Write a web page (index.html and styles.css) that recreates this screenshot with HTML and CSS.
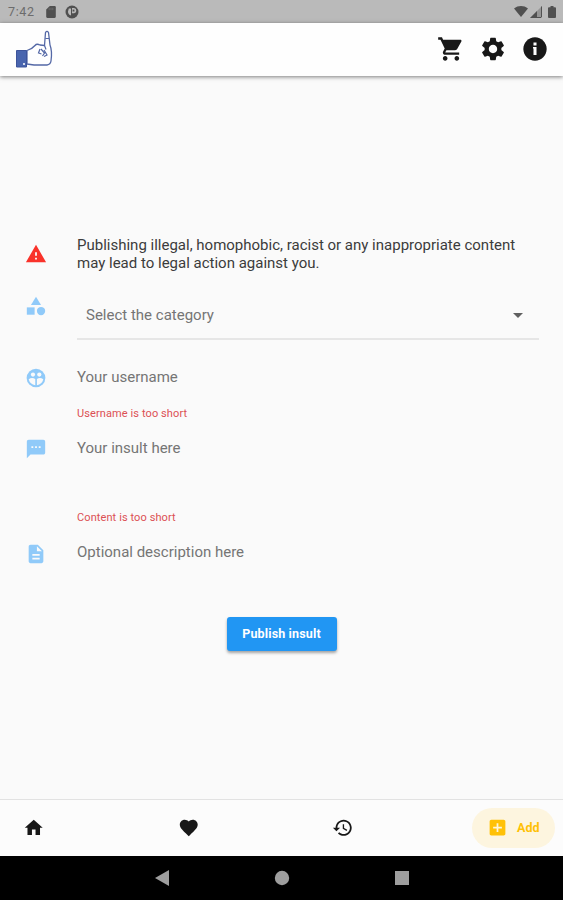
FILE: index.html
```html
<!DOCTYPE html>
<html lang="en">
<head>
<meta charset="utf-8">
<title>Publish insult</title>
<link rel="stylesheet" href="styles.css">
</head>
<body>
<div class="screen">
  <div class="status">
    <span class="clock">7:42</span>
    <svg class="sd" viewBox="4 2 16 20"><path d="M18 2h-8L4 8v12c0 1.100.9 2 2 2h12c1.100 0 2-.9 2-2V4c0-1.100-.9-2-2-2z"/><path d="M9 5v4M12 5v4M15 5v4" stroke="#777" stroke-width="1.200"/></svg>
    <svg class="pp" viewBox="0 0 14 14"><circle cx="7" cy="7" r="6.500"/><path d="M3.800 3.400H6v7.200Q3 9.500 3 6.500zM7 3h2q2.300.4 2.300 2.700T9 8.300H7z" fill="#bababa"/><path d="M7.600 4.600h1.800v1.900H7.600z"/></svg>
    <span class="spacer"></span>
    <svg class="wifi" viewBox="0 0 14 11"><path d="M0 2.500C4-.8 10-.8 14 2.500L7 11z"/></svg>
    <svg class="cell" viewBox="0 0 12 12"><path d="M12 0v12H0z" opacity=".35"/><path d="M7 5v7H0zM11 1v11h1V0zM7 11h5v1H7z"/></svg>
    <svg class="battery" viewBox="0 0 8 12"><path d="M2.500 0h3v1.200H7q1 0 1 1V11q0 1-1 1H1q-1 0-1-1V2.200q0-1 1-1h1.500z"/></svg>
  </div>
  <header class="appbar">
    <svg class="logo" viewBox="0 0 38 40">
      <path d="M11 20.500C14 19.500 17 18 19 15.500C20 14.200 22 14 24 15L28.500 15.500L29.500 2.500Q31 .2 32.500 2.500L34 15C36 20 36 24 35 31Q34.500 34.500 31 35L18 35L11 34z" fill="#fff" stroke="#5468a6" stroke-width="1.300" stroke-linejoin="round"/>
      <path d="M29.300 8.500h3.800M28.500 15.500l1.500 4M24 19l-1.500 4 3 1M25 19l3.500 4-2 3M28 20l3 5-3 1.500" fill="none" stroke="#5468a6" stroke-width="1.200"/>
      <path d="M.5 20.500h10V37H.5z" fill="#4965ae" stroke="#3d549b"/>
      <circle cx="8" cy="34" r="1" fill="#fff"/>
    </svg>
    <span class="spacer"></span>
    <svg class="action" viewBox="0 0 24 24"><path d="M7 18c-1.100 0-1.990.9-1.990 2S5.900 22 7 22s2-.9 2-2-.9-2-2-2zM1 2v2h2l3.600 7.590-1.350 2.450c-.16.280-.25.610-.25.960 0 1.100.9 2 2 2h12v-2H7.420c-.14 0-.25-.11-.25-.25l.03-.12.900-1.630h7.450c.75 0 1.410-.41 1.750-1.030l3.580-6.490c.08-.14.120-.31.120-.48 0-.55-.45-1-1-1H5.210l-.94-2H1zm16 16c-1.100 0-1.990.9-1.990 2s.89 2 1.990 2 2-.9 2-2-.9-2-2-2z"/></svg>
    <svg class="action" viewBox="0 0 24 24"><path d="M19.140 12.940c.04-.3.060-.61.060-.94 0-.32-.02-.64-.07-.94l2.030-1.580c.18-.14.230-.41.120-.61l-1.920-3.320c-.12-.22-.37-.29-.59-.22l-2.390.960c-.5-.38-1.030-.7-1.620-.94l-.36-2.540c-.04-.24-.24-.41-.48-.41h-3.840c-.24 0-.43.170-.47.410l-.36 2.540c-.59.240-1.130.570-1.620.940l-2.390-.96c-.22-.08-.47 0-.59.220L2.740 8.870c-.12.210-.08.470.120.610l2.030 1.580c-.05.300-.09.630-.09.940s.02.640.070.940l-2.030 1.580c-.18.140-.23.410-.12.610l1.920 3.320c.12.220.37.290.59.220l2.390-.96c.5.380 1.030.700 1.620.940l.36 2.540c.05.240.24.410.48.410h3.840c.24 0 .44-.17.470-.41l.36-2.540c.59-.24 1.130-.56 1.620-.94l2.390.960c.22.080.47 0 .59-.22l1.920-3.320c.12-.22.070-.47-.12-.61l-2.010-1.580zM12 15.600c-1.980 0-3.600-1.620-3.600-3.600s1.620-3.600 3.600-3.600 3.600 1.620 3.600 3.600-1.620 3.600-3.600 3.600z"/></svg>
    <svg class="action" viewBox="0 0 24 24"><path d="M12 2C6.480 2 2 6.480 2 12s4.480 10 10 10 10-4.480 10-10S17.520 2 12 2z"/><path class="info-mark" d="M10.700 6.500h2.600v2.500h-2.600zM10.300 10.300h3v6.900h-2.600v-5.600h-.4z"/></svg>
  </header>
  <main class="form">
    <div class="row warning">
      <svg class="icon red" viewBox="0 0 24 24"><path d="M1 21h22L12 2 1 21zm12-3h-2v-2h2v2zm0-4h-2v-4h2v4z"/></svg>
      <p class="notice">Publishing illegal, homophobic, racist or any inappropriate content<br>may lead to legal action against you.</p>
    </div>
    <div class="row category">
      <svg class="icon" viewBox="0 0 24 24"><path d="M12 2l-5.500 9h11z"/><circle cx="17.500" cy="17.500" r="4.500"/><path d="M2 13.500h8.500v8H2z"/></svg>
      <div class="select"><span>Select the category</span><svg class="caret" viewBox="0 0 10 5"><path d="M0 0h10L5 5z"/></svg></div>
    </div>
    <div class="row username">
      <svg class="icon" viewBox="0 0 24 24"><circle cx="12" cy="12" r="10.200"/><g fill="#fafafa"><circle cx="8.700" cy="8.300" r="2.300"/><circle cx="15.600" cy="8.300" r="2.300"/><path d="M4 13.300Q7.500 11 11.200 13v6.800Q5.500 19 4 13.300zM13 13q3.500-2 7 .3Q18.500 19 13 19.800z"/></g></svg>
      <div class="field"><span>Your username</span><span class="error">Username is too short</span></div>
    </div>
    <div class="row insult">
      <svg class="icon" viewBox="0 0 24 24"><path d="M20 2H4c-1.100 0-1.990.9-1.990 2L2 22l4-4h14c1.100 0 2-.9 2-2V4c0-1.100-.9-2-2-2zM9 11H7V9h2v2zm4 0h-2V9h2v2zm4 0h-2V9h2v2z"/></svg>
      <div class="field"><span>Your insult here</span><span class="error">Content is too short</span></div>
    </div>
    <div class="row description">
      <svg class="icon" viewBox="0 0 24 24"><path d="M14 2H6c-1.100 0-1.990.9-1.990 2L4 20c0 1.100.890 2 1.990 2H18c1.100 0 2-.9 2-2V8l-6-6zm2 16H8v-2h8v2zm0-4H8v-2h8v2zm-3-5V3.500L18.500 9H13z"/></svg>
      <div class="field"><span>Optional description here</span></div>
    </div>
    <button class="publish">Publish insult</button>
  </main>
  <nav class="tabs">
    <div class="group">
      <svg class="tab" viewBox="0 0 24 24"><path d="M10 20v-6h4v6h5v-8h3L12 3 2 12h3v8z"/></svg>
      <svg class="tab" viewBox="0 0 24 24"><path d="M12 21.350l-1.450-1.320C5.400 15.360 2 12.280 2 8.500 2 5.420 4.420 3 7.500 3c1.740 0 3.410.810 4.500 2.090C13.090 3.810 14.760 3 16.500 3 19.580 3 22 5.420 22 8.500c0 3.780-3.400 6.860-8.550 11.540L12 21.350z"/></svg>
      <svg class="tab" viewBox="0 0 24 24"><path d="M13 3c-4.970 0-9 4.030-9 9H1l3.890 3.890.070.140L9 12H6c0-3.870 3.130-7 7-7s7 3.130 7 7-3.130 7-7 7c-1.930 0-3.680-.79-4.940-2.060l-1.420 1.420C8.270 19.990 10.510 21 13 21c4.970 0 9-4.030 9-9s-4.030-9-9-9zm-1 5v5l4.280 2.540.720-1.210-3.500-2.080V8H12z"/></svg>
    </div>
    <div class="add"><svg viewBox="0 0 24 24"><path d="M19 3H5c-1.110 0-2 .9-2 2v14c0 1.100.890 2 2 2h14c1.100 0 2-.9 2-2V5c0-1.100-.9-2-2-2zm-2 10h-4v4h-2v-4H7v-2h4V7h2v4h4v2z"/></svg><span>Add</span></div>
  </nav>
  <footer class="system">
    <svg viewBox="0 0 16 16"><path d="M15 0v16L1 8z"/></svg>
    <svg viewBox="0 0 16 16"><circle cx="8" cy="8" r="7.200"/></svg>
    <svg viewBox="0 0 16 16"><path d="M1 1h14v14H1z"/></svg>
  </footer>
</div>
</body>
</html>
```
FILE: styles.css
```css
* { box-sizing: border-box; }
body { margin: 0; font-family: Roboto, sans-serif; background: #fafafa; }
svg { display: block; flex: none; }
.screen { width: 563px; height: 900px; display: flex; flex-direction: column; overflow: hidden; }
.spacer { flex: 1; }

.status { height: 23px; flex: none; display: flex; align-items: center; padding: 0 7px 0 8px; background: #bababa; fill: #505050; }
.clock { width: 38px; font-size: 12.500px; letter-spacing: .6px; color: #6c6c6c; }
.sd { width: 10px; height: 12px; margin-right: 9px; }
.pp { width: 14px; height: 14px; }
.wifi { width: 14px; height: 11px; margin-right: 2px; }
.cell { width: 12px; height: 12px; margin-right: 6px; }
.battery { width: 8px; height: 12px; }

.appbar { height: 53px; flex: none; display: flex; align-items: center; gap: 14px; padding: 0 14px 1px 16px; background: #fefefe; box-shadow: 0 1px 4px rgba(0, 0, 0, .5); }
.logo { width: 38px; height: 40px; margin-top: 1px; }
.action { width: 28px; height: 28px; fill: #181818; }
.action .info-mark { fill: #fefefe; }

.form { flex: 1; display: flex; flex-direction: column; padding: 160px 24px 0 25px; }
.row { display: flex; gap: 30px; flex: none; font-size: 15px; line-height: 20px; color: #757575; }
.icon { width: 22px; height: 22px; fill: #90caf9; }
.red { fill: #f9322a; }
.warning { height: 55px; }
.warning .icon { margin-top: 7px; }
.notice { margin: 0; line-height: 18px; color: #3c3c3c; white-space: nowrap; }
.category { height: 76px; }
.category .icon { margin-top: 4px; }
.select { flex: 1; height: 49px; display: flex; justify-content: space-between; align-items: center; padding: 1px 16px 0 9px; border-bottom: 2px solid #e6e6e6; }
.caret { width: 10px; height: 5px; fill: #606060; }
.field { flex: 1; display: flex; flex-direction: column; justify-content: space-between; }
.error { font-size: 11px; line-height: 14px; letter-spacing: .1px; color: #dc5054; }
.username { height: 71px; padding-bottom: 17px; }
.insult { height: 104px; padding-bottom: 17px; }
.description { height: 75px; }
.description .icon { margin-top: 1px; }
.publish { align-self: center; width: 110px; height: 34px; margin-right: 1px; padding: 0 0 1px; border: 0; border-radius: 3px; background: #2196f3; color: #fff; font: 700 12.500px Roboto, sans-serif; letter-spacing: .15px; box-shadow: 0 2px 3px rgba(0, 0, 0, .35); }

.tabs { height: 57px; flex: none; display: flex; align-items: center; justify-content: space-between; padding: 0 8px 1px 23px; background: #fcfcfc; border-top: 1px solid #e2e2e2; fill: #181818; }
.group { display: flex; gap: 133px; }
.tab { width: 21.500px; height: 21.500px; }
.add { width: 83px; height: 40px; display: flex; align-items: center; gap: 9px; padding-left: 15px; border-radius: 20px; background: #fdf5df; color: #ffc107; fill: #ffc107; font-size: 12.500px; font-weight: 700; }
.add svg { width: 21px; height: 21px; }

.system { height: 44px; flex: none; display: flex; align-items: center; justify-content: center; gap: 104px; background: #000; fill: #9e9e9e; }
.system svg { width: 16px; height: 16px; }
```
